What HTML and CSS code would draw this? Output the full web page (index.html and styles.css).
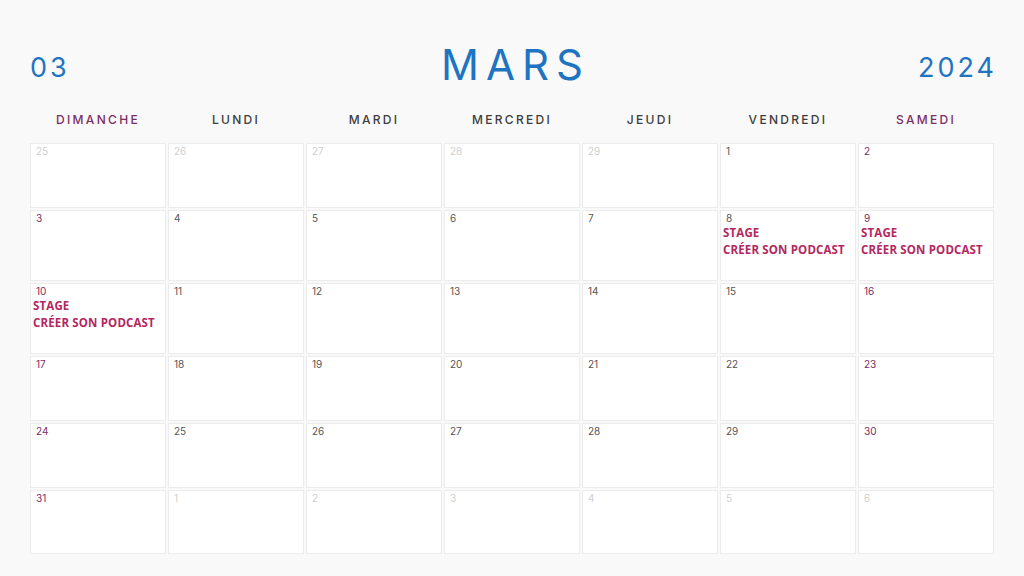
FILE: index.html
```html
<!DOCTYPE html>
<html lang="fr">
<head>
<meta charset="utf-8">
<title>Mars 2024</title>
<link rel="stylesheet" href="styles.css">
</head>
<body>
<div class="page">
  <header class="top">
    <div class="side left">03</div>
    <h1 class="month">MARS</h1>
    <div class="side right">2024</div>
  </header>
  <div class="weekdays">
    <div class="wd weekend">DIMANCHE</div>
    <div class="wd">LUNDI</div>
    <div class="wd">MARDI</div>
    <div class="wd">MERCREDI</div>
    <div class="wd">JEUDI</div>
    <div class="wd">VENDREDI</div>
    <div class="wd weekend">SAMEDI</div>
  </div>
  <div class="grid">
    <div class="cell"><span class="num other">25</span></div>
    <div class="cell"><span class="num other">26</span></div>
    <div class="cell"><span class="num other">27</span></div>
    <div class="cell"><span class="num other">28</span></div>
    <div class="cell"><span class="num other">29</span></div>
    <div class="cell"><span class="num">1</span></div>
    <div class="cell"><span class="num we">2</span></div>

    <div class="cell"><span class="num we">3</span></div>
    <div class="cell"><span class="num">4</span></div>
    <div class="cell"><span class="num">5</span></div>
    <div class="cell"><span class="num">6</span></div>
    <div class="cell"><span class="num">7</span></div>
    <div class="cell"><span class="num">8</span><div class="event">STAGE<br>CRÉER SON PODCAST</div></div>
    <div class="cell"><span class="num we">9</span><div class="event">STAGE<br>CRÉER SON PODCAST</div></div>

    <div class="cell"><span class="num we">10</span><div class="event">STAGE<br>CRÉER SON PODCAST</div></div>
    <div class="cell"><span class="num">11</span></div>
    <div class="cell"><span class="num">12</span></div>
    <div class="cell"><span class="num">13</span></div>
    <div class="cell"><span class="num">14</span></div>
    <div class="cell"><span class="num">15</span></div>
    <div class="cell"><span class="num we">16</span></div>

    <div class="cell"><span class="num we">17</span></div>
    <div class="cell"><span class="num">18</span></div>
    <div class="cell"><span class="num">19</span></div>
    <div class="cell"><span class="num">20</span></div>
    <div class="cell"><span class="num">21</span></div>
    <div class="cell"><span class="num">22</span></div>
    <div class="cell"><span class="num we">23</span></div>

    <div class="cell"><span class="num we">24</span></div>
    <div class="cell"><span class="num">25</span></div>
    <div class="cell"><span class="num">26</span></div>
    <div class="cell"><span class="num">27</span></div>
    <div class="cell"><span class="num">28</span></div>
    <div class="cell"><span class="num">29</span></div>
    <div class="cell"><span class="num we">30</span></div>

    <div class="cell"><span class="num we">31</span></div>
    <div class="cell"><span class="num other">1</span></div>
    <div class="cell"><span class="num other">2</span></div>
    <div class="cell"><span class="num other">3</span></div>
    <div class="cell"><span class="num other">4</span></div>
    <div class="cell"><span class="num other">5</span></div>
    <div class="cell"><span class="num other">6</span></div>
  </div>
</div>
</body>
</html>
```

FILE: styles.css
```css
html, body {
  margin: 0;
  padding: 0;
  background: #f9f9f9;
}

body {
  font-family: Inter, "Open Sans", sans-serif;
  color: #444;
}

.page {
  width: 1024px;
  height: 576px;
  box-sizing: border-box;
  padding: 40px 30px 0 30px;
}

.top {
  display: grid;
  grid-template-columns: 1fr auto 1fr;
  align-items: center;
  height: 50px;
}

.side {
  font-size: 27px;
  font-weight: 400;
  letter-spacing: 3px;
  color: #1f74c2;
  line-height: 1;
  margin-top: 4px;
}

.side.right {
  text-align: right;
  margin-right: -3px;
}

.month {
  margin: 0 -7px 0 0;
  font-size: 42px;
  font-weight: 400;
  letter-spacing: 7px;
  color: #1f74c2;
  line-height: 1;
}

.weekdays {
  display: grid;
  grid-template-columns: repeat(7, 136px);
  column-gap: 2px;
  margin-top: 12px;
  height: 34px;
  align-items: center;
}

.wd {
  text-align: center;
  font-size: 12px;
  letter-spacing: 2.3px;
  color: #3d3d3d;
  font-weight: 500;
}

.wd.weekend {
  color: #7b2d66;
}

.grid {
  display: grid;
  grid-template-columns: repeat(7, 136px);
  grid-template-rows: 65px 71px 71px 65px 65px 64px;
  gap: 2px;
  margin-top: 7px;
}

.cell {
  background: #fff;
  border: 1px solid #ececec;
  box-sizing: border-box;
  padding: 0 2px 0 2px;
  display: flex;
  flex-direction: column;
}

.num {
  font-size: 10px;
  line-height: 14px;
  padding-left: 3px;
  color: #555;
}

.num.we {
  color: #7b2d66;
}

.num.other {
  color: #cfcfcf;
}

.event {
  font-family: "Open Sans", sans-serif;
  font-weight: 700;
  font-size: 11.5px;
  line-height: 16.5px;
  color: #b3285f;
  letter-spacing: 0.15px;
  margin-top: 0;
}
```
